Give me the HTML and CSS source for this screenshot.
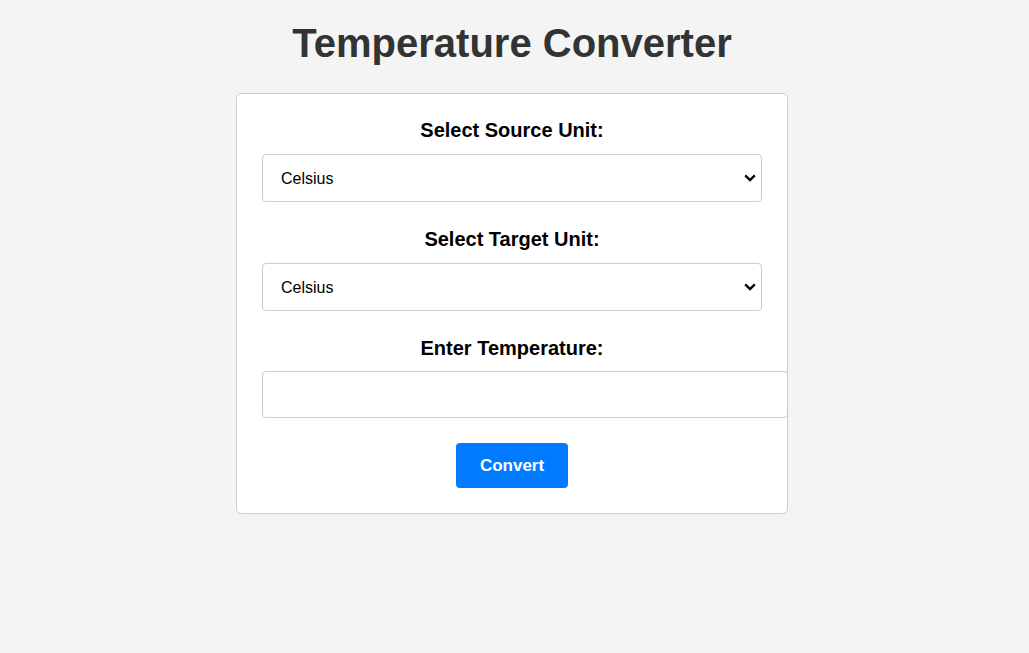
FILE: index.html
```html
<!DOCTYPE html>
<html lang="en">
<head>
<meta charset="utf-8">
<title>Temperature Converter</title>
<link rel="stylesheet" href="styles.css">
</head>
<body>
<main class="page">
  <h1 class="title">Temperature Converter</h1>
  <div class="card">
    <label class="field-label" for="src">Select Source Unit:</label>
    <div class="select-wrap">
      <select id="src" class="field-select">
        <option>Celsius</option>
        <option>Fahrenheit</option>
        <option>Kelvin</option>
      </select>
      <svg class="chevron" width="12" height="8" viewBox="0 0 12 8" aria-hidden="true"><path d="M1.2 1.4 L6 6 L10.8 1.4" fill="none" stroke="#000" stroke-width="2.4"/></svg>
    </div>
    <label class="field-label" for="dst">Select Target Unit:</label>
    <div class="select-wrap">
      <select id="dst" class="field-select">
        <option>Celsius</option>
        <option>Fahrenheit</option>
        <option>Kelvin</option>
      </select>
      <svg class="chevron" width="12" height="8" viewBox="0 0 12 8" aria-hidden="true"><path d="M1.2 1.4 L6 6 L10.8 1.4" fill="none" stroke="#000" stroke-width="2.4"/></svg>
    </div>
    <label class="field-label" for="temp">Enter Temperature:</label>
    <input id="temp" class="field-input" type="number">
    <div class="actions">
      <button class="convert-btn" type="button">Convert</button>
    </div>
  </div>
</main>
</body>
</html>
```
FILE: styles.css
```css
html, body {
  margin: 0;
  padding: 0;
}
body {
  background: #f4f4f4;
  font-family: Arial, "Liberation Sans", sans-serif;
  color: #000;
}
.page {
  padding: 20px 5px 20px 0;
}
.title {
  text-align: center;
  color: #333;
  font-size: 40px;
  font-weight: bold;
  margin: 0 0 27px 0;
  line-height: 46px;
}
.card {
  width: 500px;
  margin: 0 auto;
  background: #fff;
  border: 1px solid #ccc;
  border-radius: 5px;
  padding: 25px;
}
.field-label {
  display: block;
  text-align: center;
  font-size: 20px;
  font-weight: bold;
  line-height: 23px;
  margin-bottom: 12px;
}
.select-wrap {
  position: relative;
  margin: 0 0 26px 0;
}
.field-select {
  display: block;
  box-sizing: border-box;
  width: 100%;
  height: 48px;
  padding: 0 18px;
  font-size: 16px;
  font-family: Arial, "Liberation Sans", sans-serif;
  border: 1px solid #ccc;
  border-radius: 4px;
  background: #fff;
  color: #000;
  -webkit-appearance: none;
  appearance: none;
  margin: 0;
}
.chevron {
  position: absolute;
  right: 6px;
  top: 20px;
  pointer-events: none;
}
.field-input {
  display: block;
  box-sizing: content-box;
  width: 100%;
  height: 21px;
  padding: 12px;
  font-size: 16px;
  border: 1px solid #ccc;
  border-radius: 4px;
  margin: -1px 0 25px 0;
}
.actions {
  text-align: center;
}
.convert-btn {
  background: #007bff;
  color: #fff;
  border: none;
  border-radius: 4px;
  font-size: 17px;
  font-weight: bold;
  font-family: Arial, "Liberation Sans", sans-serif;
  width: 112px;
  height: 45px;
  padding: 0;
  cursor: pointer;
  vertical-align: top;
}
```
